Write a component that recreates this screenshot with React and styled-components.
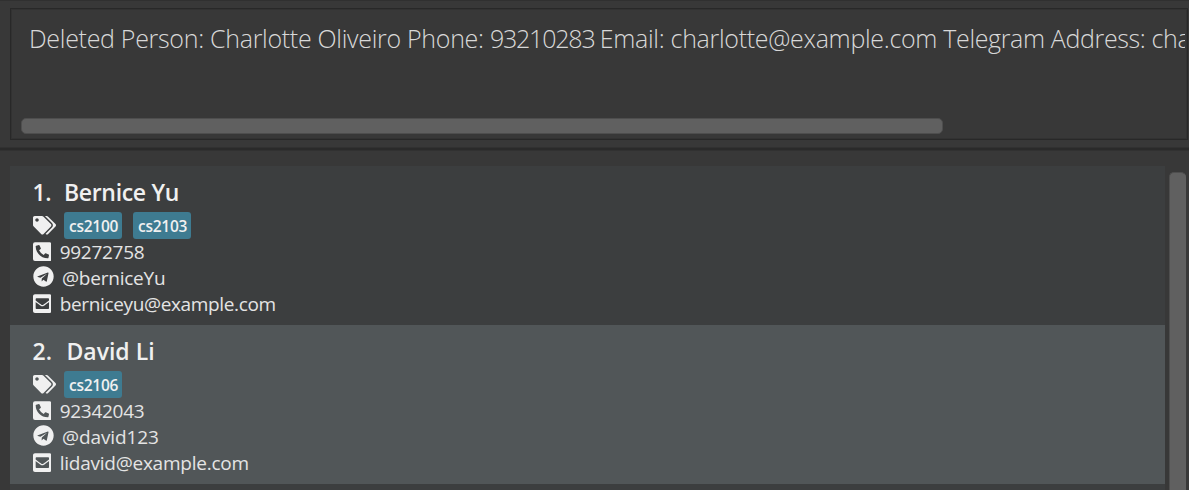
import React from "react";
import styled, { createGlobalStyle } from "styled-components";
import { FaTags, FaPhoneSquareAlt, FaTelegram, FaEnvelopeSquare } from "react-icons/fa";

const GlobalStyle = createGlobalStyle`
  * { box-sizing: border-box; }
  body {
    margin: 0;
    overflow: hidden;
    background: #383838;
    font-family: "Open Sans", "Noto Sans", sans-serif;
  }
`;

const Window = styled.main`
  display: flex;
  flex-direction: column;
  width: 1189px;
  height: 490px;
  overflow: hidden;
  border-top: 1px solid #303030;
`;

const ResultPane = styled.section`
  display: flex;
  height: 146px;
  padding: 7px 1px 7px 10px;
`;

const ResultBox = styled.div`
  display: flex;
  flex: 1;
  min-width: 0;
  flex-direction: column;
  justify-content: space-between;
  border: 1px solid #282828;
  box-shadow: inset 0 0 0 1px #323232;
  padding: 11px 2px 5px 10px;
`;

const ResultText = styled.p`
  margin: 0 0 0 8px;
  overflow: hidden;
  white-space: pre;
  font-size: 25px;
  font-weight: 300;
  line-height: 36px;
  color: #d8d8d8;
`;

const ResultPart = styled.span`
  letter-spacing: ${(p) => p.$tracking}px;
`;

const HorizontalThumb = styled.div`
  width: 922px;
  height: 16px;
  border: 1px solid #4e4e4e;
  border-radius: 5px;
  background: #606060;
`;

const Divider = styled.div`
  height: 4px;
  flex: none;
  background: #2a2a2a;
  border: solid #313131;
  border-width: 1px 0;
`;

const ListPane = styled.section`
  display: flex;
  flex: 1;
  gap: 4px;
  padding: 15px 3px 0 10px;
`;

const PersonList = styled.ol`
  flex: 1;
  margin: 0;
  padding: 0;
  list-style: none;
  background: #3c3e3f;
`;

const Card = styled.li`
  display: flex;
  flex-direction: column;
  height: 159px;
  padding: 9px 0 0 22.5px;
  color: #f0f0f0;
  background: ${(p) => (p.$alternate ? "#515658" : "#3c3e3f")};
`;

const Heading = styled.h2`
  display: flex;
  gap: ${(p) => p.$gap}px;
  margin: 0;
  height: 36px;
  font-size: 23px;
  font-weight: 600;
  line-height: 34px;
  letter-spacing: ${(p) => p.$tracking}px;
`;

const DetailRow = styled.div`
  display: flex;
  align-items: center;
  gap: 8.5px;
  height: 26px;
`;

const DetailText = styled.span`
  font-size: 19px;
  line-height: 26px;
  letter-spacing: ${(p) => p.$tracking}px;
  color: #e4e4e4;
`;

const TagRow = styled.div`
  display: flex;
  align-items: center;
  height: 28px;
`;

const TagList = styled.div`
  display: flex;
  gap: 11px;
  margin-left: 8.5px;
`;

const Tag = styled.span`
  width: 58px;
  height: 27px;
  border-radius: 3px;
  padding-left: 5px;
  background: #3e7b91;
  font-size: 15.5px;
  font-weight: 600;
  line-height: 28px;
  letter-spacing: -0.25px;
`;

const TagsIcon = styled(FaTags)`
  width: 23px;
  height: 18.4px;
  margin-top: 1px;
`;

const SquareGlyph = styled.span`
  display: flex;
  margin-top: -1.5px;

  svg {
    width: 18.7px;
    height: 21.4px;
  }
`;

const TelegramIcon = styled(FaTelegram)`
  width: 21px;
  height: 21px;
  margin-top: -2.5px;
`;

const ScrollTrack = styled.div`
  display: flex;
  width: 17px;
  padding-top: 6px;
`;

const VerticalThumb = styled.div`
  flex: 1;
  border: 1px solid #4e4e4e;
  border-bottom: 0;
  border-right-color: #606060;
  border-radius: 5px 5px 0 0;
  background: #606060;
`;

const resultParts = [
  { text: "Deleted Person: Charlotte Oliveiro Phone: ", tracking: -0.3 },
  { text: "93210283 ", tracking: -1.2 },
  { text: "Email: charlotte@example.com ", tracking: -0.3 },
  { text: "Telegram Address: charlotte", tracking: -0.36 },
];

const people = [
  {
    name: "Bernice Yu", nameTracking: -0.3, nameGap: 12.5,
    tags: ["cs2100", "cs2103"],
    phone: "99272758",
    telegram: "@berniceYu", telegramTracking: -0.22,
    email: "berniceyu@example.com", emailTracking: -0.35,
  },
  {
    name: "David Li", nameTracking: 0, nameGap: 14.5,
    tags: ["cs2106"],
    phone: "92342043",
    telegram: "@david123", telegramTracking: -0.1,
    email: "lidavid@example.com", emailTracking: -0.24,
  },
];

function PersonCard({ person, index }) {
  return (
    <Card $alternate={index % 2 === 1}>
      <Heading $gap={person.nameGap} $tracking={person.nameTracking}>
        <span>{index + 1}.</span>
        <span>{person.name}</span>
      </Heading>
      <TagRow>
        <TagsIcon />
        <TagList>
          {person.tags.map((tag) => <Tag key={tag}>{tag}</Tag>)}
        </TagList>
      </TagRow>
      <DetailRow>
        <SquareGlyph><FaPhoneSquareAlt /></SquareGlyph>
        <DetailText $tracking={-0.28}>{person.phone}</DetailText>
      </DetailRow>
      <DetailRow>
        <TelegramIcon />
        <DetailText $tracking={person.telegramTracking}>{person.telegram}</DetailText>
      </DetailRow>
      <DetailRow>
        <SquareGlyph><FaEnvelopeSquare /></SquareGlyph>
        <DetailText $tracking={person.emailTracking}>{person.email}</DetailText>
      </DetailRow>
    </Card>
  );
}

export default function App() {
  return (
    <>
      <GlobalStyle />
      <Window>
        <ResultPane>
          <ResultBox>
            <ResultText>
              {resultParts.map((part) => (
                <ResultPart key={part.text} $tracking={part.tracking}>{part.text}</ResultPart>
              ))}
            </ResultText>
            <HorizontalThumb />
          </ResultBox>
        </ResultPane>
        <Divider />
        <ListPane>
          <PersonList>
            {people.map((person, index) => (
              <PersonCard key={person.name} person={person} index={index} />
            ))}
          </PersonList>
          <ScrollTrack>
            <VerticalThumb />
          </ScrollTrack>
        </ListPane>
      </Window>
    </>
  );
}
